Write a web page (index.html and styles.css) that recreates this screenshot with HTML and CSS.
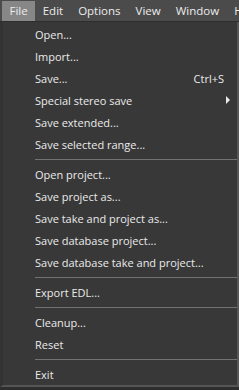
FILE: index.html
```html
<!DOCTYPE html>
<html>
<head>
<meta charset="utf-8">
<link rel="stylesheet" href="styles.css">
</head>
<body>
<div class="menubar">
  <div class="mb-item active">File</div>
  <div class="mb-item">Edit</div>
  <div class="mb-item">Options</div>
  <div class="mb-item">View</div>
  <div class="mb-item">Window</div>
  <div class="mb-item">Help</div>
</div>
<div class="menu">
  <div class="item">Open...</div>
  <div class="item">Import...</div>
  <div class="item"><span class="label">Save...</span><span class="shortcut">Ctrl+S</span></div>
  <div class="item"><span class="label">Special stereo save</span><span class="arrow"></span></div>
  <div class="item">Save extended...</div>
  <div class="item">Save selected range...</div>
  <div class="sep"><div class="line"></div></div>
  <div class="item">Open project...</div>
  <div class="item">Save project as...</div>
  <div class="item">Save take and project as...</div>
  <div class="item">Save database project...</div>
  <div class="item">Save database take and project...</div>
  <div class="sep"><div class="line"></div></div>
  <div class="item">Export EDL...</div>
  <div class="sep"><div class="line"></div></div>
  <div class="item">Cleanup...</div>
  <div class="item">Reset</div>
  <div class="sep"><div class="line"></div></div>
  <div class="item">Exit</div>
</div>
</body>
</html>
```
FILE: styles.css
```css
html, body {
  margin: 0;
  padding: 0;
}
body {
  background: #2e2e2e;
  font-family: "Open Sans", "Noto Sans", sans-serif;
  font-size: 11px;
  color: #ebebeb;
  width: 239px;
  height: 390px;
  overflow: hidden;
}
.menubar {
  display: flex;
  height: 21px;
  background: #4b4b4b;
  padding-left: 2px;
  box-sizing: border-box;
  padding-top: 1px;
  white-space: nowrap;
  overflow: hidden;
}
.mb-item {
  height: 20px;
  line-height: 20px;
  padding: 0 7.5px;
  flex: none;
  font-size: 11.5px;
}
.mb-item.active {
  background: #878787;
}
.menu {
  margin-top: 1px;
  width: 234px;
  background: #383838;
  border-left: 3px solid #333333;
  border-right: 2px solid #575757;
  border-bottom: 2px solid #555555;
  padding: 1px 0 0;
}
.item {
  display: flex;
  align-items: center;
  height: 22px;
  padding-left: 32px;
  padding-right: 13px;
  white-space: nowrap;
}
.label {
  flex: 1;
}
.shortcut {
  flex: none;
}
.arrow {
  width: 0;
  height: 0;
  border-top: 4px solid transparent;
  border-bottom: 4px solid transparent;
  border-left: 4px solid #ebebeb;
  margin-right: -6px;
}
.sep {
  height: 8px;
  display: flex;
  align-items: center;
  padding-left: 32px;
  padding-right: 0;
}
.line {
  flex: 1;
  height: 1px;
  background: #727272;
}
```
